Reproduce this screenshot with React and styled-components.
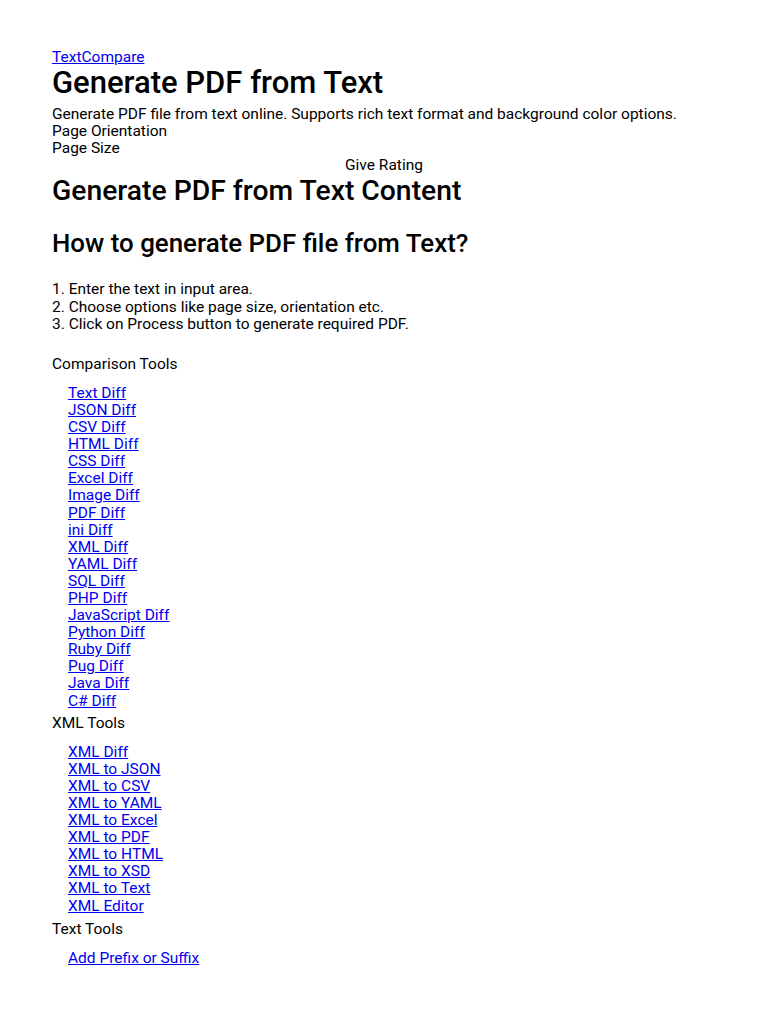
import React from 'react';
import styled, { createGlobalStyle } from 'styled-components';

const GlobalStyle = createGlobalStyle`
  html, body {
    margin: 0;
    padding: 0;
    background: #fff;
  }
  body {
    font-family: Roboto, "Liberation Sans", Arial, sans-serif;
    font-size: 15.5px;
    line-height: 17.1px;
    color: #000;
  }
`;

const Page = styled.div`
  padding: 49px 52px 40px;
`;

const Link = styled.a`
  color: #0000ee;
  text-decoration: underline;
`;

const Brand = styled.div`
  display: block;
`;

const Title = styled.h1`
  margin: 0;
  font-size: 31px;
  line-height: 33px;
  font-weight: 500;
`;

const Lead = styled.p`
  margin: 7px 0 0;
`;

const Line = styled.div``;

const Rating = styled.div`
  text-align: center;
  margin-right: ${p => p.$shift || 0}px;
`;

const SubTitle = styled.h2`
  margin: 0;
  font-size: 28.3px;
  line-height: 33px;
  font-weight: 500;
`;

const HowTo = styled.h3`
  margin: 22px 0 0;
  font-size: 25.9px;
  line-height: 29px;
  font-weight: 500;
`;

const Steps = styled.ol`
  margin: 23px 0 0;
  padding: 0;
  list-style: none;
`;

const GroupTitle = styled.div`
  margin-top: ${p => p.$gap}px;
`;

const LinkList = styled.ul`
  margin: 12px 0 0;
  padding: 0 0 0 16px;
  list-style: none;
`;

const groups = [
  {
    title: 'Comparison Tools',
    gap: 23,
    links: [
      'Text Diff', 'JSON Diff', 'CSV Diff', 'HTML Diff', 'CSS Diff', 'Excel Diff',
      'Image Diff', 'PDF Diff', 'ini Diff', 'XML Diff', 'YAML Diff', 'SQL Diff',
      'PHP Diff', 'JavaScript Diff', 'Python Diff', 'Ruby Diff', 'Pug Diff',
      'Java Diff', 'C# Diff',
    ],
  },
  {
    title: 'XML Tools',
    gap: 5,
    links: [
      'XML Diff', 'XML to JSON', 'XML to CSV', 'XML to YAML', 'XML to Excel',
      'XML to PDF', 'XML to HTML', 'XML to XSD', 'XML to Text', 'XML Editor',
    ],
  },
  {
    title: 'Text Tools',
    gap: 6,
    links: ['Add Prefix or Suffix'],
  },
];

const steps = [
  'Enter the text in input area.',
  'Choose options like page size, orientation etc.',
  'Click on Process button to generate required PDF.',
];

const App = () => (
  <>
    <GlobalStyle />
    <Page>
      <Brand>
        <Link href="#">TextCompare</Link>
      </Brand>
      <Title>Generate PDF from Text</Title>
      <Lead>Generate PDF file from text online. Supports rich text format and background color options.</Lead>
      <Line>Page Orientation</Line>
      <Line>Page Size</Line>
      <Rating>Give Rating</Rating>
      <SubTitle>Generate PDF from Text Content</SubTitle>
      <HowTo>How to generate PDF file from Text?</HowTo>
      <Steps>
        {steps.map((s, i) => (
          <li key={i}>{i + 1}. {s}</li>
        ))}
      </Steps>
      {groups.map(g => (
        <div key={g.title}>
          <GroupTitle $gap={g.gap}>{g.title}</GroupTitle>
          <LinkList>
            {g.links.map(l => (
              <li key={l}>
                <Link href="#">{l}</Link>
              </li>
            ))}
          </LinkList>
        </div>
      ))}
    </Page>
  </>
);

export default App;
